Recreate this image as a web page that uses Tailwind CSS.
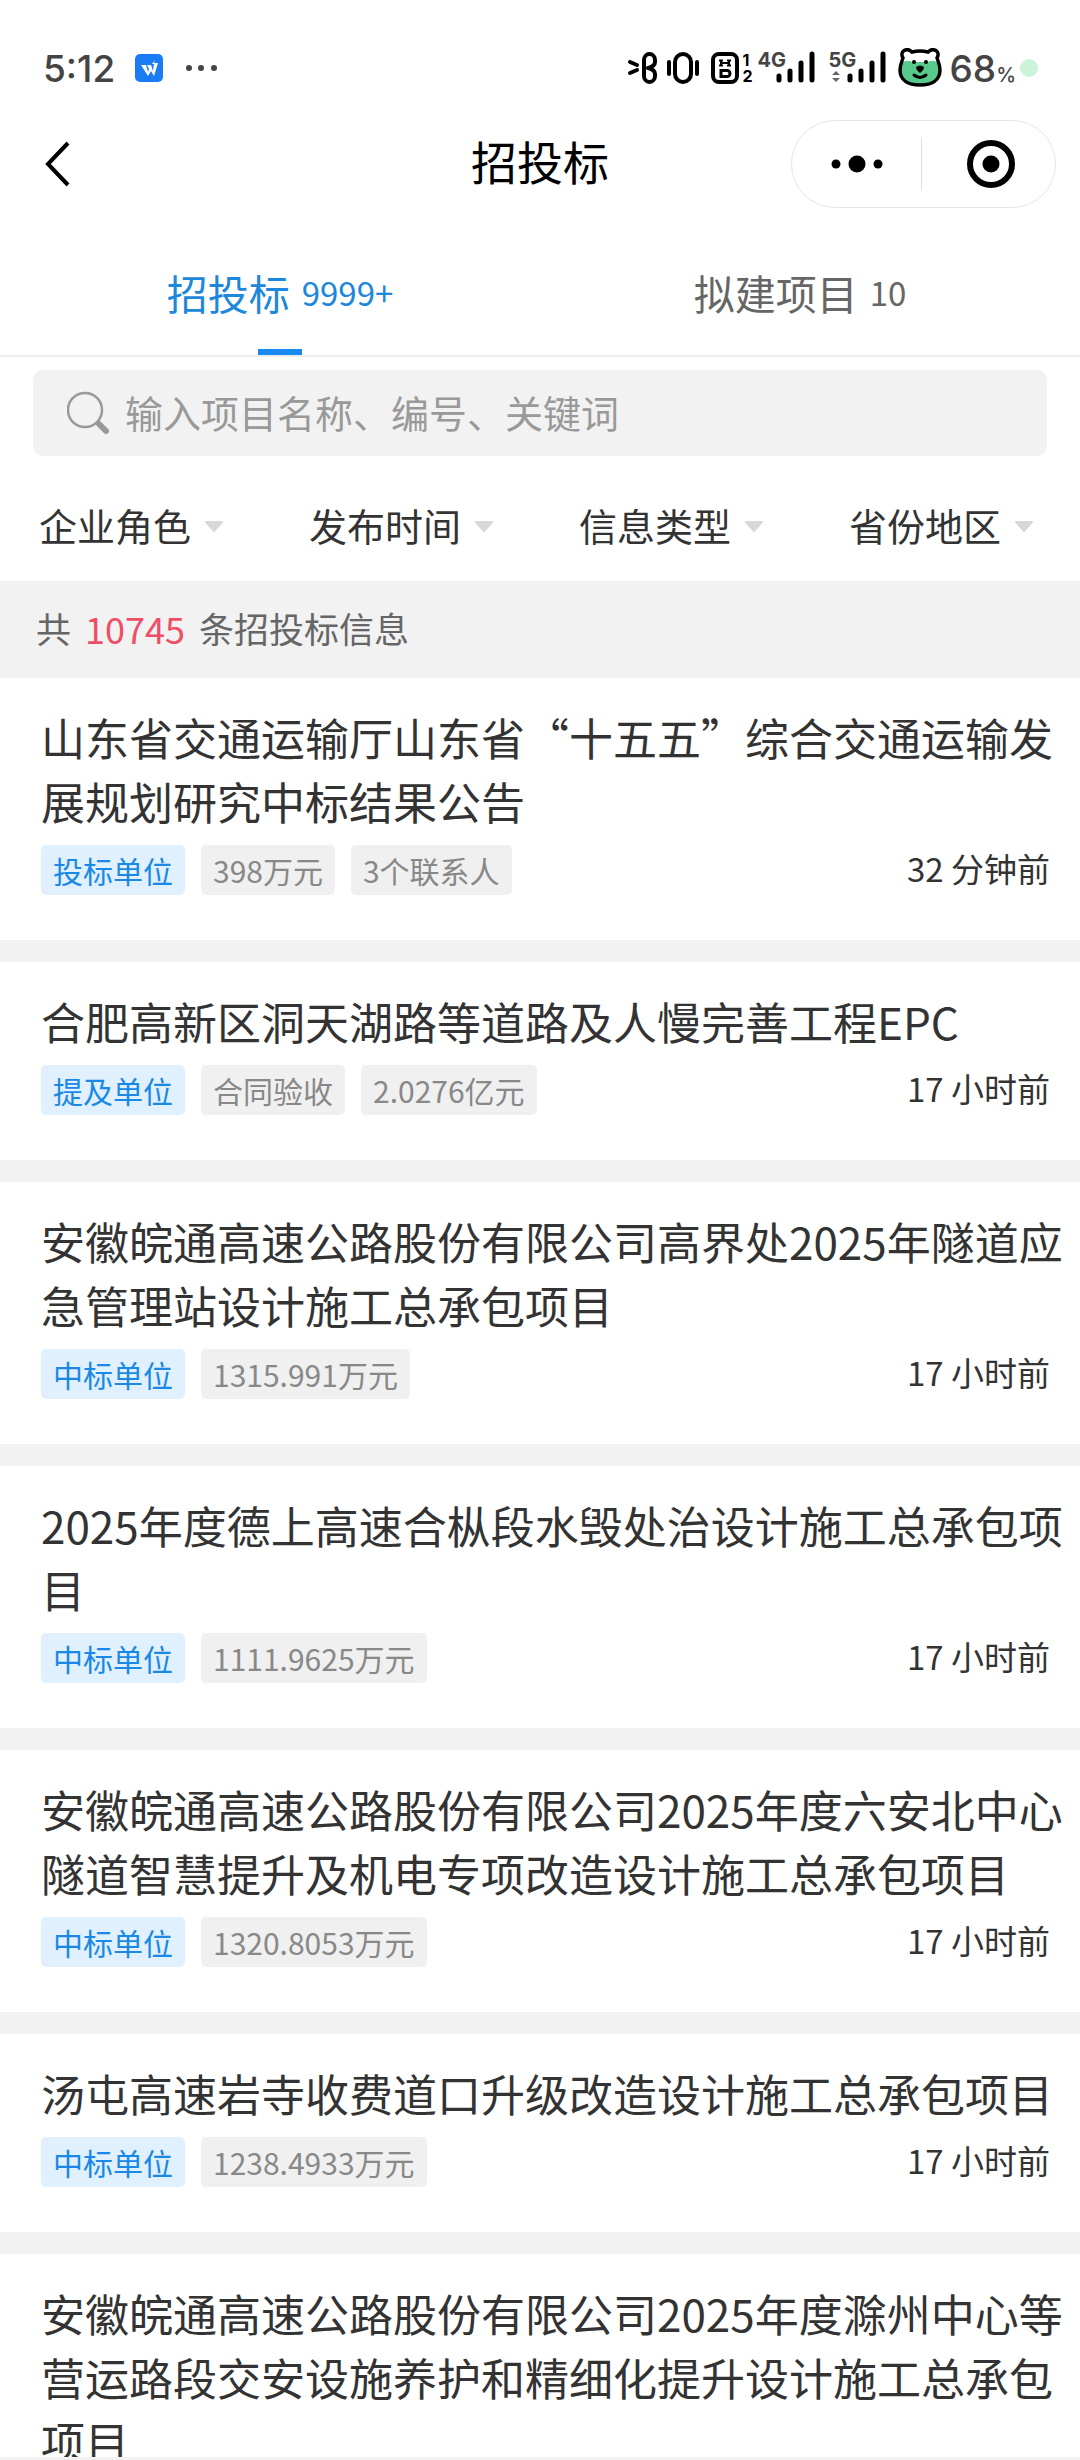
<!DOCTYPE html>
<html lang="zh-CN">
<head>
    <meta charset="UTF-8">
    <meta name="viewport" content="width=device-width, initial-scale=1.0">
    <title>招投标</title>
    <script src="https://cdn.jsdelivr.net/npm/@tailwindcss/browser@4"></script>
</head>
<body class="flex flex-col h-screen bg-white text-[#333] font-['Noto_Sans_CJK_SC',sans-serif] overflow-x-hidden">
    <!-- Status bar -->
    <div class="shrink-0 flex items-center justify-between h-[112px] pt-6 pl-[43px] pr-[42px] font-[Inter,sans-serif] text-[#444]">
        <div class="flex items-center">
            <span class="text-[37px] leading-none font-medium">5:12</span>
            <svg class="w-7 h-7 ml-5" viewBox="0 0 28 28">
                <rect width="28" height="28" rx="5" fill="#1a7cf5"/>
                <path d="M6 11h5l2 7 1-3-2-4h4l2 6 1-7-2 0 3-4-1 3h4l-4 13-3-5-3 5z" fill="#fff"/>
            </svg>
            <svg class="w-8 h-7 ml-[22px]" viewBox="0 0 32 28" fill="#444">
                <circle cx="4" cy="14" r="3"/><circle cx="16" cy="14" r="3"/><circle cx="29" cy="14" r="3"/>
            </svg>
        </div>
        <div class="flex items-center">
            <!-- Bluetooth -->
            <svg class="w-8 h-10" viewBox="0 0 32 40" fill="none" stroke="#000" stroke-width="4" stroke-linecap="round" stroke-linejoin="round">
                <path d="M3 14l7 3M3 25l7-3"/>
                <path d="M17 12v16M17 12a5.500 6 0 0 1 11 0v2c0 3-3 5-7 6 4 1 7 3 7 6v2a5.500 6 0 0 1-11 0"/>
            </svg>
            <!-- Vibrate -->
            <svg class="w-8 h-10 ml-2" viewBox="0 0 32 40" fill="none" stroke="#000" stroke-width="4" stroke-linecap="round">
                <rect x="8" y="6" width="16" height="28" rx="8"/>
                <path d="M2 14v12M30 14v12"/>
            </svg>
            <!-- HD 1/2 -->
            <svg class="w-7 h-10 ml-3" viewBox="0 0 28 40" fill="none" stroke="#000" stroke-width="4">
                <rect x="2" y="6" width="24" height="28" rx="6"/>
                <path d="M8 12.500h4M16 12.500h4M8 17.500h4M16 17.500h4M10 12v6M18 12v6M10 15h8" stroke-width="2"/>
                <path d="M10 22.500h6a3 3 0 0 1 0 6h-6z" stroke-width="3"/>
            </svg>
            <div class="flex flex-col ml-1 w-[11px] text-[16px] leading-4 font-bold text-black">
                <span>1</span><span>2</span>
            </div>
            <!-- Signal 4G -->
            <div class="relative ml-1 w-[57px] h-10">
                <span class="absolute left-0 top-0 text-[20px] leading-6 font-bold">4G</span>
                <svg class="w-full h-full" viewBox="0 0 57 40" stroke="#000" stroke-width="5" stroke-linecap="round">
                    <path d="M21 28v4M32 23v9M43 15v17M54 6v26" />
                </svg>
            </div>
            <!-- Signal 5G -->
            <div class="relative ml-[14px] w-[57px] h-10">
                <span class="absolute left-0 top-0 text-[20px] leading-6 font-bold">5G</span>
                <svg class="w-full h-full" viewBox="0 0 57 40" stroke="#000" stroke-width="5" stroke-linecap="round">
                    <path d="M21 28v4M32 23v9M43 15v17M54 6v26" />
                    <path d="M3 27l4-4 4 4zM3 30l4 4 4-4z" fill="#666" stroke="none"/>
                </svg>
            </div>
            <!-- Bear battery -->
            <svg class="w-11 h-10 ml-3" viewBox="0 0 44 40">
                <path d="M5 10C1 3 9-1 14 4q8-2 16 0c5-5 13-1 9 6 1 3 3 7 3 12 0 10-8 15-20 15S2 32 2 22c0-5 2-9 3-12z" fill="#fff"/>
                <path d="M4 15q5-4 10-1h16q5-3 10 1c4 13-3 22-18 22S0 28 4 15z" fill="#57ca8c"/>
                <path d="M5 10C1 3 9-1 14 4q8-2 16 0c5-5 13-1 9 6 1 3 3 7 3 12 0 10-8 15-20 15S2 32 2 22c0-5 2-9 3-12z" fill="none" stroke="#000" stroke-width="3.500"/>
                <circle cx="16" cy="14" r="2"/><circle cx="28" cy="14" r="2"/>
                <path d="M18 19q4-3 8 0 0 3-4 6-4-3-4-6z"/>
                <path d="M16 27q6 5 12 0" fill="none" stroke="#000" stroke-width="3" stroke-linecap="round"/>
            </svg>
            <span class="flex items-baseline ml-2 leading-none font-medium">
                <span class="text-[37px]">68</span><span class="text-[20px]">%</span>
            </span>
            <span class="w-[18px] h-[18px] ml-1 rounded-full bg-[#cbf3d9]"></span>
        </div>
    </div>

    <!-- Nav bar -->
    <header class="shrink-0 grid grid-cols-3 items-center h-[104px] px-6">
        <button aria-label="返回" class="justify-self-start pl-5">
            <svg class="w-7 h-12" viewBox="0 0 28 48" fill="none" stroke="#000" stroke-width="4">
                <path d="M24 3L4 24l20 21"/>
            </svg>
        </button>
        <h1 class="pb-2 text-[46px] leading-[64px] text-black text-center">招投标</h1>
        <div class="justify-self-end flex items-center w-[265px] h-[88px] rounded-full border border-[#e5e5e5]">
            <button aria-label="更多" class="flex-1 flex justify-center">
                <svg class="w-[52px] h-5" viewBox="0 0 52 20"><circle cx="5" cy="10" r="4.500"/><circle cx="26" cy="10" r="8.500"/><circle cx="47" cy="10" r="4.500"/></svg>
            </button>
            <span class="w-px h-[52px] bg-[#ddd]"></span>
            <button aria-label="关闭" class="flex-1 flex justify-center pl-1">
                <svg class="w-[50px] h-[50px]" viewBox="0 0 50 50"><circle cx="25" cy="25" r="21" fill="none" stroke="#000" stroke-width="6"/><circle cx="25" cy="25" r="8.500"/></svg>
            </button>
        </div>
    </header>

    <!-- Tabs -->
    <nav class="shrink-0 grid grid-cols-2 h-[141px] pt-[14px] px-5 border-b-2 border-[#ececec]">
        <a href="#" class="relative flex items-center justify-center gap-3 text-[#1d87dc]">
            <span class="text-[41px]">招投标</span>
            <span class="text-[33px]">9999+</span>
            <span class="absolute bottom-0 left-1/2 -translate-x-1/2 w-11 h-[6px] bg-[#1989ee]"></span>
        </a>
        <a href="#" class="flex items-center justify-center gap-3 text-[#666]">
            <span class="text-[41px]">拟建项目</span>
            <span class="text-[33px]">10</span>
        </a>
    </nav>

    <!-- Search -->
    <label class="shrink-0 flex items-center h-[86px] mt-[13px] mx-[33px] pl-[34px] rounded-[10px] bg-[#f2f2f2]">
        <svg class="w-[42px] h-[44px] shrink-0" viewBox="0 0 42 44" fill="none" stroke="#999">
            <circle cx="18" cy="19" r="17" stroke-width="2.500"/>
            <path d="M30 31l2 2" stroke-width="3"/>
            <path d="M32 33l7 7" stroke-width="6" stroke-linecap="round"/>
        </svg>
        <input type="text" aria-label="搜索" placeholder="输入项目名称、编号、关键词" class="flex-1 ml-4 pb-1 text-[38px] outline-none placeholder:text-[#999]">
    </label>

    <!-- Filters -->
    <div class="shrink-0 grid grid-cols-4 h-[126px] pt-3 border-b border-[#eee]">
        <button class="flex items-center pl-[39px] text-[38px]">企业角色<svg class="w-[18px] h-3 ml-[14px] mt-1" viewBox="0 0 18 12"><path d="M1 1h16L9 10z" fill="#d8d8d8" stroke="#d8d8d8" stroke-width="2" stroke-linejoin="round"/></svg></button>
        <button class="flex items-center pl-[39px] text-[38px]">发布时间<svg class="w-[18px] h-3 ml-[14px] mt-1" viewBox="0 0 18 12"><path d="M1 1h16L9 10z" fill="#d8d8d8" stroke="#d8d8d8" stroke-width="2" stroke-linejoin="round"/></svg></button>
        <button class="flex items-center pl-[39px] text-[38px]">信息类型<svg class="w-[18px] h-3 ml-[14px] mt-1" viewBox="0 0 18 12"><path d="M1 1h16L9 10z" fill="#d8d8d8" stroke="#d8d8d8" stroke-width="2" stroke-linejoin="round"/></svg></button>
        <button class="flex items-center pl-[39px] text-[38px]">省份地区<svg class="w-[18px] h-3 ml-[14px] mt-1" viewBox="0 0 18 12"><path d="M1 1h16L9 10z" fill="#d8d8d8" stroke="#d8d8d8" stroke-width="2" stroke-linejoin="round"/></svg></button>
    </div>

    <!-- Result count -->
    <p class="shrink-0 flex items-center gap-[14px] h-24 pb-1 pl-9 bg-[#f2f2f2] text-[35px] text-[#666]">
        <span>共</span><span class="text-[36px] text-[#ee4f66]">10745</span><span>条招投标信息</span>
    </p>

    <!-- Bid list -->
    <main id="bidList" class="flex-1 min-h-0 flex flex-col gap-[22px] overflow-hidden bg-[#f2f2f2] border-b-[3px] border-[#f2f2f2]"></main>

    <script>
        const bids = [
            { title: '山东省交通运输厅山东省“十五五”综合交通运输发展规划研究中标结果公告', role: '投标单位', tags: ['398万元', '3个联系人'], time: '32 分钟前' },
            { title: '合肥高新区洞天湖路等道路及人慢完善工程EPC', role: '提及单位', tags: ['合同验收', '2.0276亿元'], time: '17 小时前' },
            { title: '安徽皖通高速公路股份有限公司高界处2025年隧道应急管理站设计施工总承包项目', role: '中标单位', tags: ['1315.991万元'], time: '17 小时前' },
            { title: '2025年度德上高速合枞段水毁处治设计施工总承包项目', role: '中标单位', tags: ['1111.9625万元'], time: '17 小时前' },
            { title: '安徽皖通高速公路股份有限公司2025年度六安北中心隧道智慧提升及机电专项改造设计施工总承包项目', role: '中标单位', tags: ['1320.8053万元'], time: '17 小时前' },
            { title: '汤屯高速岩寺收费道口升级改造设计施工总承包项目', role: '中标单位', tags: ['1238.4933万元'], time: '17 小时前' },
            { title: '安徽皖通高速公路股份有限公司2025年度滁州中心等营运路段交安设施养护和精细化提升设计施工总承包项目', role: '', tags: [], time: '' }
        ];

        document.getElementById('bidList').innerHTML = bids.map(bid => `
            <article class="shrink-0 bg-white pt-[27px] pb-[45px] pl-[41px]">
                <h2 class="pr-3 text-[44px] leading-[64px]">${bid.title}</h2>
                ${bid.role ? `
                <div class="flex items-start mt-3 pr-[30px]">
                    <div class="flex gap-4 text-[30px] leading-[50px]">
                        <span class="px-3 rounded-[5px] bg-[#e1f0fe] text-[#1989e5]">${bid.role}</span>
                        ${bid.tags.map(tag => `<span class="px-3 rounded-[5px] bg-[#f0f0f0] text-[#888]">${tag}</span>`).join('')}
                    </div>
                    <time class="ml-auto text-[33px] leading-[46px]">${bid.time}</time>
                </div>` : ''}
            </article>
        `).join('');
    </script>
</body>
</html>
